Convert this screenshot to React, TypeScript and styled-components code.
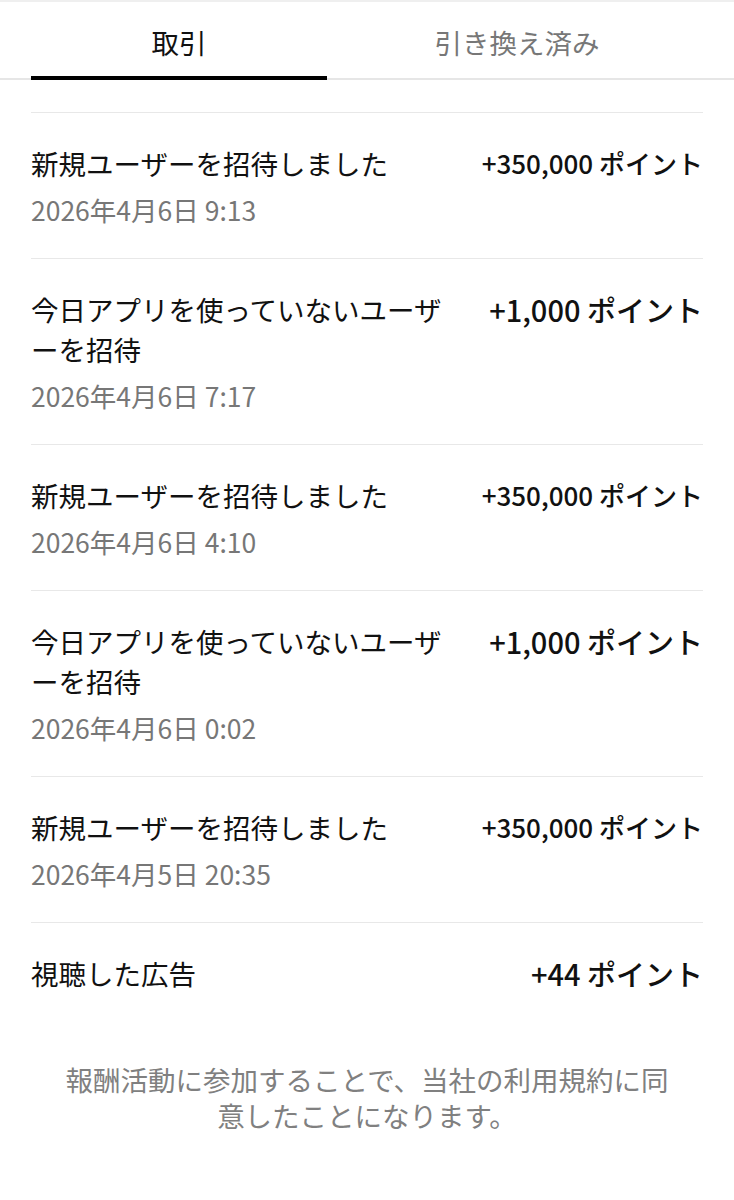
import React from 'react';
import styled, { createGlobalStyle } from 'styled-components';

const GlobalStyle = createGlobalStyle`
  body {
    margin: 0;
    background: #fff;
    font-family: "Noto Sans CJK JP", "Noto Sans", sans-serif;
    color: #111;
  }
`;

const Page = styled.div`
  width: 734px;
  background: #fff;
`;

const TabBar = styled.div`
  display: flex;
  gap: 42px;
  padding: 0 31px;
  border-top: 2px solid #efefef;
  box-shadow: inset 0 -2px 0 #e6e6e6;
`;

const Tab = styled.div<{ $active?: boolean }>`
  box-sizing: border-box;
  width: 296px;
  height: 78px;
  padding-top: 6px;
  display: flex;
  align-items: center;
  justify-content: center;
  font-size: 27.5px;
  font-weight: 400;
  color: ${(p) => (p.$active ? '#111' : '#777')};
  border-bottom: 4px solid ${(p) => (p.$active ? '#000' : 'transparent')};
`;

const List = styled.div`
  margin-top: 32px;
  padding: 0 31px;
`;

const Row = styled.div`
  border-top: 1px solid #e8e8e8;
  padding: 30px 0 32px;
`;

const Top = styled.div`
  display: flex;
  align-items: flex-start;
  justify-content: space-between;
  gap: 30px;
`;

const Title = styled.div`
  max-width: 428px;
  font-size: 27.5px;
  line-height: 40px;
`;

const Amount = styled.div<{ $size: number }>`
  flex-shrink: 0;
  font-size: ${(p) => p.$size}px;
  font-weight: 500;
  line-height: 40px;
  white-space: nowrap;
`;

const DateText = styled.div`
  margin-top: 11px;
  font-size: 26.5px;
  line-height: 32px;
  color: #777;
`;

const Footer = styled.p`
  margin: 36px 0 0;
  padding: 0 62px 60px;
  text-align: center;
  font-size: 27.5px;
  line-height: 36px;
  color: #808080;
`;

const rows = [
  { title: '新規ユーザーを招待しました', amount: '+350,000 ポイント', size: 26, date: '2026年4月6日 9:13' },
  { title: '今日アプリを使っていないユーザーを招待', amount: '+1,000 ポイント', size: 29, date: '2026年4月6日 7:17' },
  { title: '新規ユーザーを招待しました', amount: '+350,000 ポイント', size: 26, date: '2026年4月6日 4:10' },
  { title: '今日アプリを使っていないユーザーを招待', amount: '+1,000 ポイント', size: 29, date: '2026年4月6日 0:02' },
  { title: '新規ユーザーを招待しました', amount: '+350,000 ポイント', size: 26, date: '2026年4月5日 20:35' },
  { title: '視聴した広告', amount: '+44 ポイント', size: 29, date: '' },
];

const App: React.FC = () => (
  <Page>
    <GlobalStyle />
    <TabBar>
      <Tab $active>取引</Tab>
      <Tab>引き換え済み</Tab>
    </TabBar>
    <List>
      {rows.map((r, i) => (
        <Row key={i}>
          <Top>
            <Title>{r.title}</Title>
            <Amount $size={r.size}>{r.amount}</Amount>
          </Top>
          {r.date && <DateText>{r.date}</DateText>}
        </Row>
      ))}
    </List>
    <Footer>報酬活動に参加することで、当社の利用規約に同意したことになります。</Footer>
  </Page>
);

export default App;
